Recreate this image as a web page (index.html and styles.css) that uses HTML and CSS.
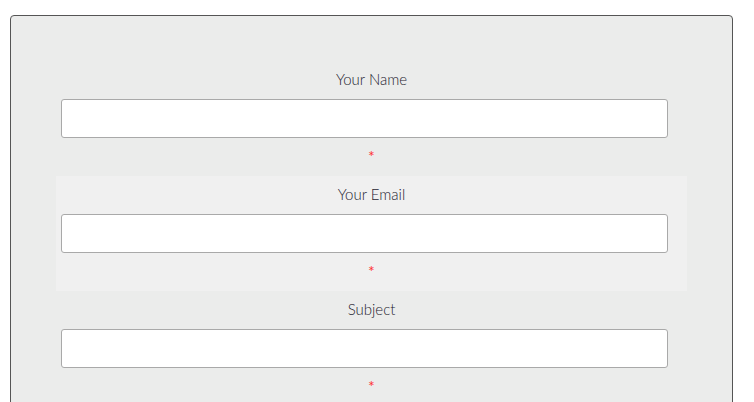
FILE: index.html
```html
<html>
<head>
<title>Contact</title>
<meta name="viewport" content="width=device-width, initial-scale=1">
<link rel="stylesheet" href="styles.css">
</head>
<body>
<div class="formbox">
  <div class="field">
    <label>Your Name</label>
    <input type="text">
    <span class="req">*</span>
  </div>
  <div class="field alt">
    <label>Your Email</label>
    <input type="text">
    <span class="req">*</span>
  </div>
  <div class="field">
    <label>Subject</label>
    <input type="text">
    <span class="req">*</span>
  </div>
</div>
</body>
</html>
```

FILE: styles.css
```css
body {
  margin: 0;
  font-family: Lato, sans-serif;
  background: white;
}

.formbox {
  margin: 15px 0 0 10px;
  width: 723px;
  box-sizing: border-box;
  border: 1px solid #555;
  border-radius: 4px;
  background: #ebeceb;
  padding: 45px 45px 0;
}

.field {
  height: 115px;
  box-sizing: border-box;
  padding-top: 8px;
  text-align: center;
}

.field.alt {
  background: #f0f0f0;
}

.field label {
  display: block;
  font-size: 15px;
  font-weight: 300;
  line-height: 20px;
  color: #1f2330;
  margin: 0 0 10px;
}

.field input {
  display: block;
  margin-left: 5px;
  width: 607px;
  height: 39px;
  box-sizing: border-box;
  border: 1px solid #a9a9a9;
  border-radius: 3px;
  background: white;
}

.req {
  display: block;
  margin-top: 10px;
  font-size: 16px;
  line-height: 16px;
  color: #f33;
}
```
